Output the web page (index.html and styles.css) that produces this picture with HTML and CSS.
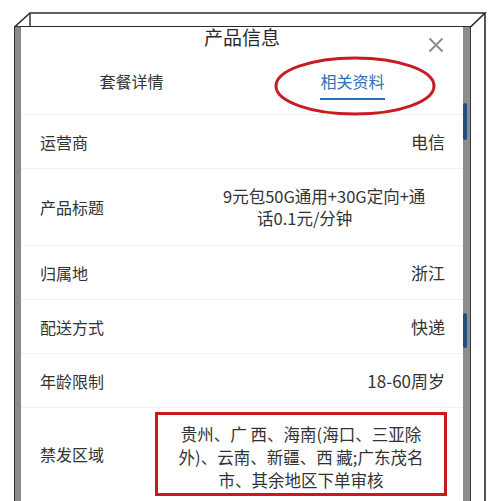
FILE: index.html
```html
<!DOCTYPE html>
<html lang="zh-CN">
<head>
  <meta charset="UTF-8" />
  <meta name="viewport" content="width=device-width, initial-scale=1.0"/>
  <title>产品信息</title>
  <link rel="stylesheet" href="styles.css">
</head>
<body>
  <div class="stage">

    <div class="device">
      <div class="screen">

        <!-- 弹窗头部 -->
        <div class="sheet-head">
          <div class="sheet-title">产品信息</div>
          <span class="sheet-close">
            <svg width="16" height="16" viewBox="0 0 16 16">
              <path d="M1.5 1.5 L14.5 14.5 M14.5 1.5 L1.5 14.5" stroke="#8a8a8a" stroke-width="1.8" fill="none"/>
            </svg>
          </span>
          <div class="tabs">
            <div class="tab">套餐详情</div>
            <div class="tab active">
              <span class="tab-text">相关资料</span>
              <svg class="mark-ellipse" width="164" height="62" viewBox="0 0 164 62">
                <ellipse cx="82" cy="31" rx="79" ry="28" stroke="#c71d22" stroke-width="3" fill="none"/>
              </svg>
            </div>
          </div>
        </div>

        <!-- 资料列表 -->
        <div class="info-list">
          <div class="info-row">
            <span class="label">运营商</span>
            <span class="value">电信</span>
          </div>
          <div class="info-row">
            <span class="label">产品标题</span>
            <span class="value title-value">9元包50G通用+30G定向+通<br>话0.1元/分钟</span>
          </div>
          <div class="info-row">
            <span class="label">归属地</span>
            <span class="value">浙江</span>
          </div>
          <div class="info-row">
            <span class="label">配送方式</span>
            <span class="value">快递</span>
          </div>
          <div class="info-row">
            <span class="label">年龄限制</span>
            <span class="value">18-60周岁</span>
          </div>
          <div class="info-row restrict-row">
            <span class="label">禁发区域</span>
            <span class="value restrict">贵州、广 西、海南(海口、三亚除<br>外)、云南、新疆、西 藏;广东茂名<br>市、其余地区下单审核</span>
          </div>
        </div>

      </div>
    </div>

    <!-- 手机边框的立体线条 -->
    <svg class="frame" width="500" height="501" viewBox="0 0 500 501">
      <path d="M14.5 27 L30 13 L485 13 L470.5 27" stroke="#2b2b2b" stroke-width="1.6" fill="none"/>
      <path d="M30 13 L30 27" stroke="#2b2b2b" stroke-width="1.4" fill="none"/>
      <path d="M485 13 L485 501" stroke="#2b2b2b" stroke-width="1.6" fill="none"/>
    </svg>
    <span class="side-key key-top"></span>
    <span class="side-key key-bottom"></span>
  </div>
</body>
</html>
```

FILE: styles.css
```css
body {
  margin: 0;
  background: #fff;
  font-family: "Noto Sans CJK SC", "Noto Sans", sans-serif;
  color: #333;
}

.stage {
  position: relative;
  width: 500px;
  height: 501px;
  overflow: hidden;
}

.device {
  margin: 26px 0 0 14px;
  width: 457px;
  height: 475px;
  box-sizing: border-box;
  border-top: 1.5px solid #2b2b2b;
  border-left: 1px solid #333;
  border-right: 1px solid #3a3a3a;
  display: flex;
}

.screen {
  flex: 1;
  background: #fff;
  border-left: 6px solid #8b8b8b;
  border-right: 7px solid #8d8d8d;
}

/* 头部 */
.sheet-head {
  position: relative;
  border-bottom: 1px solid #efefef;
}

.sheet-title {
  text-align: center;
  font-size: 19px;
  line-height: 19px;
  color: #2a2a2a;
}

.sheet-close {
  position: absolute;
  top: 10px;
  right: 19px;
  display: flex;
}

.tabs {
  display: flex;
  padding-top: 24px;
}

.tab {
  flex: 1;
  display: flex;
  flex-direction: column;
  align-items: center;
  font-size: 16px;
  line-height: 22px;
  color: #333;
  padding-bottom: 14px;
}

.tab.active {
  position: relative;
  color: #2f6fb6;
}

.tab-text {
  padding-bottom: 6px;
  border-bottom: 2.5px solid #2b6cb3;
}

.mark-ellipse {
  position: absolute;
  left: 31px;
  top: -15px;
}

/* 列表 */
.info-row {
  display: flex;
  justify-content: space-between;
  align-items: center;
  padding: 15.5px 18px 15.5px 19px;
  border-bottom: 1px solid #f1f1f1;
  font-size: 16px;
  line-height: 22px;
}

.value {
  font-size: 17px;
  text-align: right;
}

.title-value {
  width: 188px;
  padding-left: 34px;
  text-indent: -34px;
  text-align: left;
  font-size: 16.5px;
  line-height: 22.5px;
}

.restrict-row {
  padding-top: 4px;
  padding-bottom: 0;
  border-bottom: none;
}

.restrict {
  width: 292px;
  box-sizing: border-box;
  margin-right: -2px;
  padding: 8px 6px 1px;
  border: 3px solid #c8191f;
  text-align: center;
  font-size: 16.5px;
  line-height: 23px;
}

/* 外框 */
.frame {
  position: absolute;
  top: 0;
  left: 0;
  pointer-events: none;
}

.side-key {
  position: absolute;
  left: 463px;
  width: 4px;
  background: #234f7c;
  border-radius: 2px;
}

.key-top {
  top: 103px;
  height: 37px;
}

.key-bottom {
  top: 313px;
  height: 35px;
}
```
